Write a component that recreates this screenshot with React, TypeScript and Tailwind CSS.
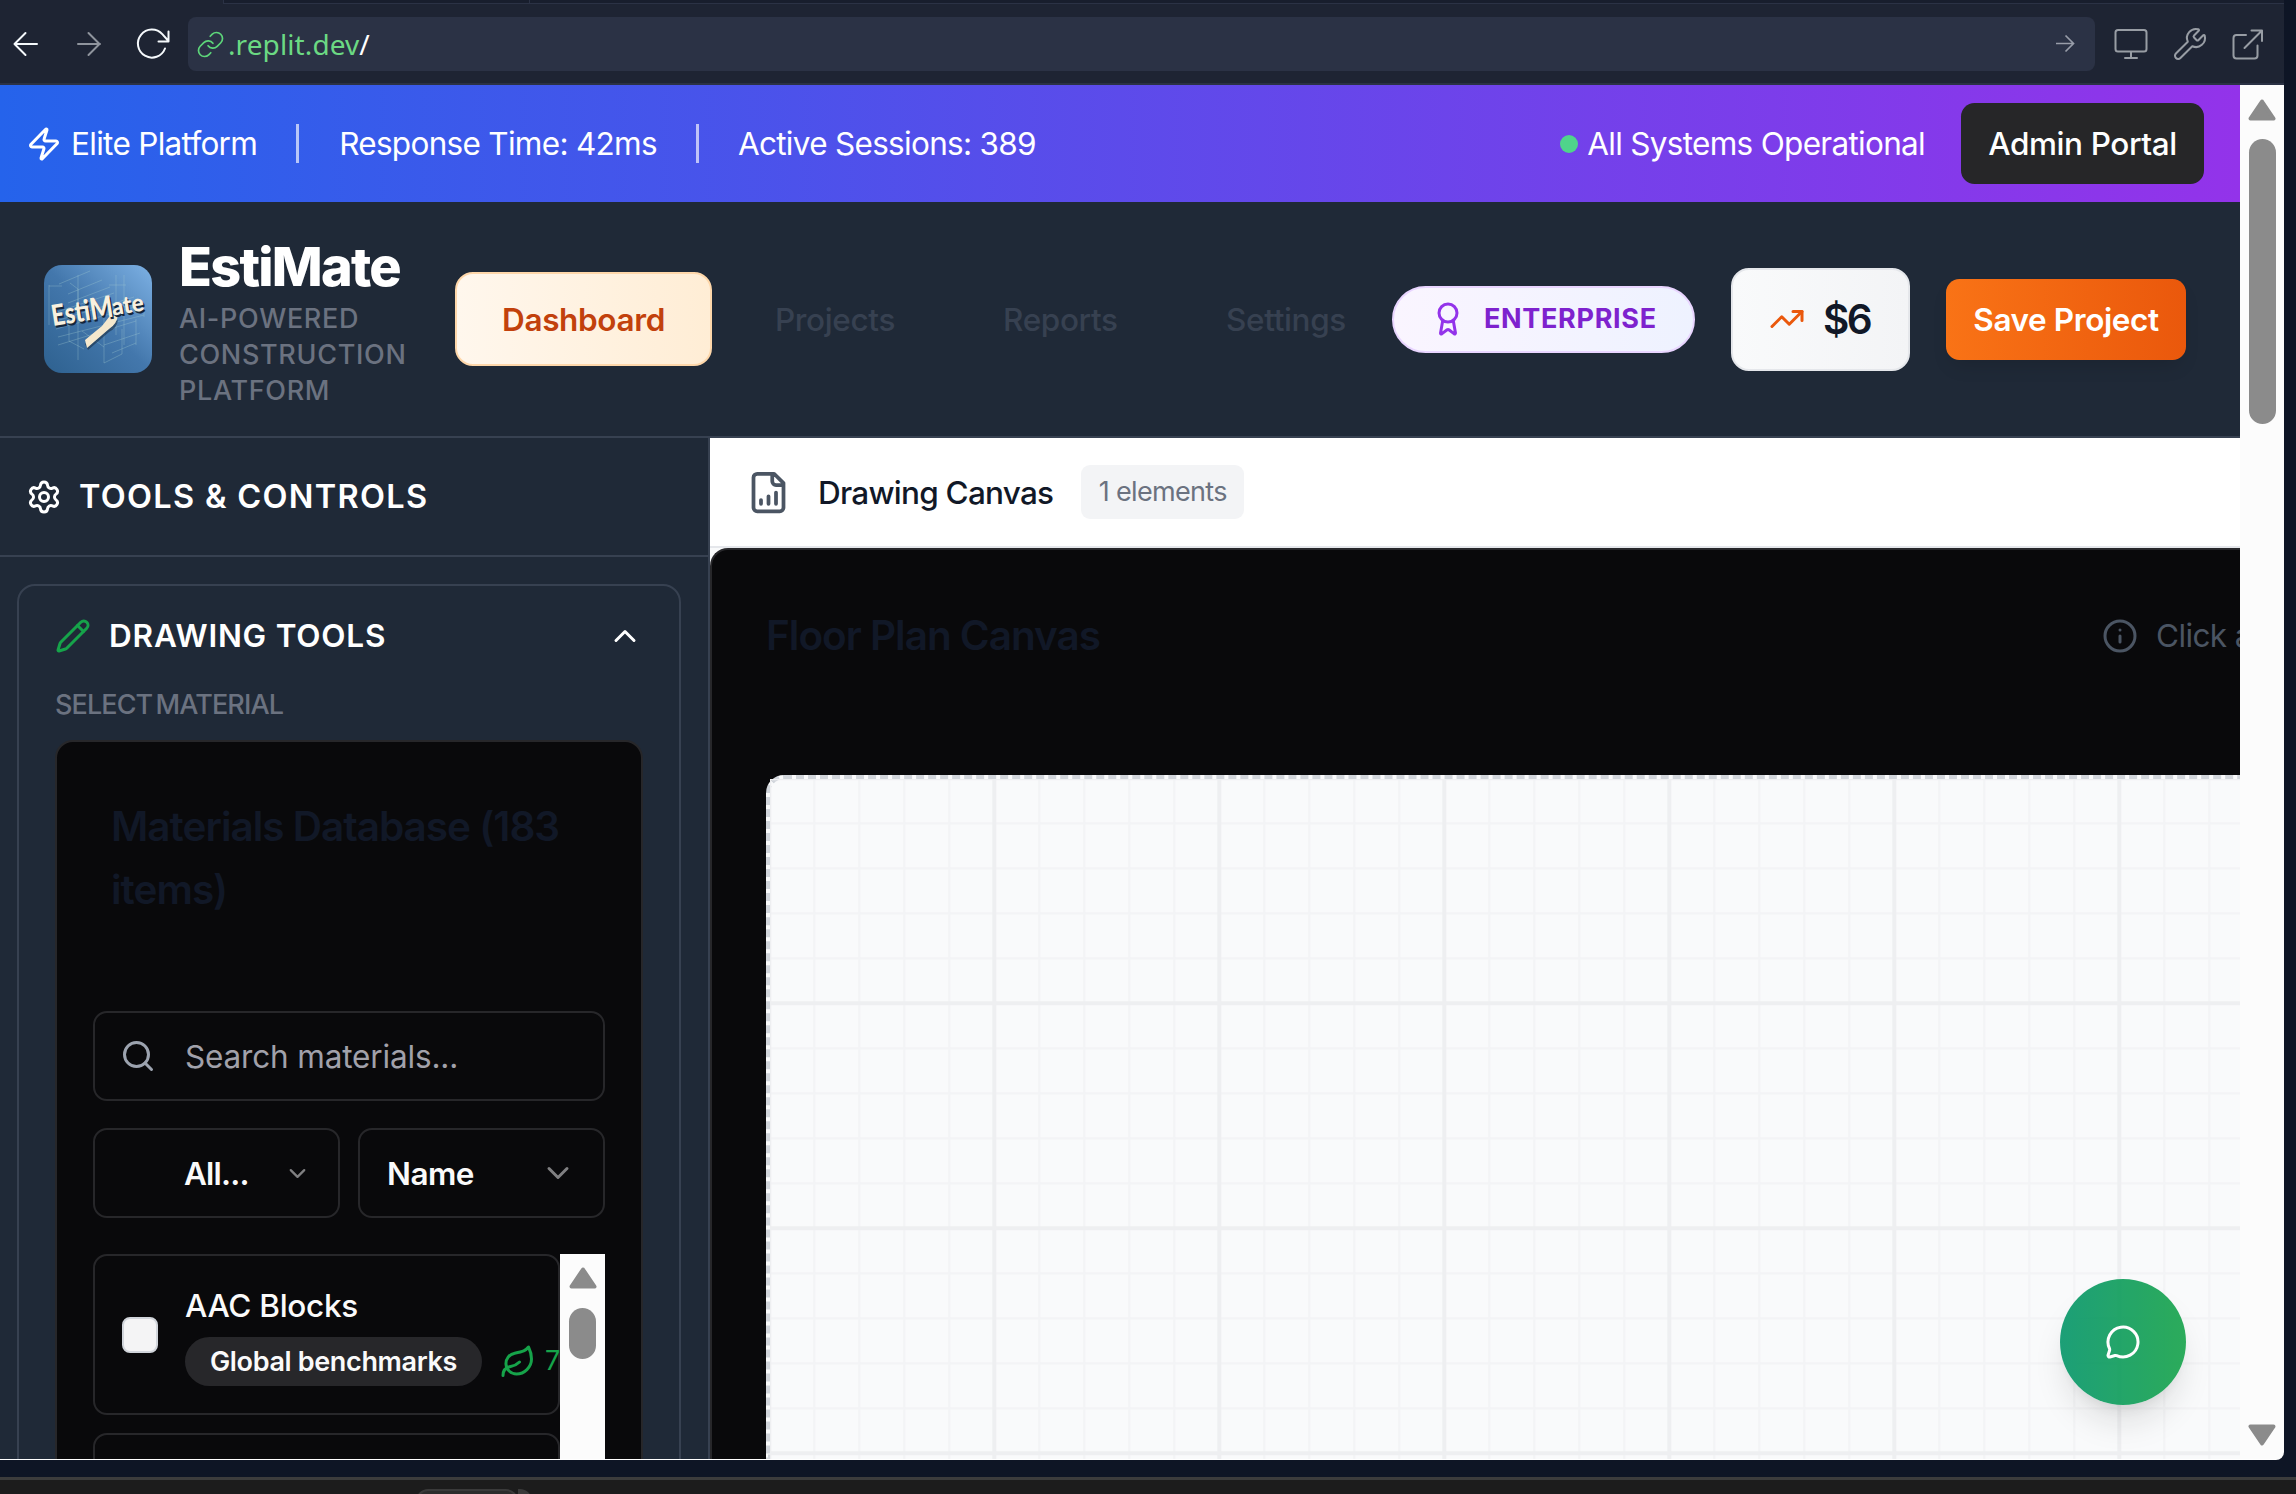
import React from "react";
import {
  Award,
  ChevronDown,
  ChevronUp,
  Info,
  Leaf,
  Link,
  MessageCircle,
  Pencil,
  Search,
  Settings,
  TrendingUp,
  Wrench,
  Zap,
} from "lucide-react";

function ToolbarIcon({ d, className }: { d: string; className: string }) {
  return (
    <svg
      viewBox="0 0 36 36"
      fill="none"
      stroke="currentColor"
      strokeWidth="2"
      strokeLinecap="round"
      strokeLinejoin="round"
      className={`size-9 shrink-0 ${className}`}
    >
      <path d={d} />
    </svg>
  );
}

function BrowserToolbar() {
  return (
    <>
      <div className="flex h-1 shrink-0">
        <div className="w-[223px]" />
        <div className="w-[306px] border-b border-l border-[#2b3245] bg-[#181e2d]" />
        <div className="flex-1 border-b border-l border-[#2b3245] bg-[#181e2d]" />
      </div>
      <div className="flex h-[81px] shrink-0 items-start border-b-2 border-[#2b3245] pt-[13px]">
        <div className="flex h-[54px] items-center pl-2">
          <ToolbarIcon className="text-[#f5f9fc]" d="M29 18H6.500M17.500 7L6.500 18l11 11" />
          <ToolbarIcon className="ml-[27px] text-[#8f949d]" d="M7 18H29M17.500 7l11 11-11 11" />
          <ToolbarIcon
            className="ml-[27px] text-[#f5f9fc]"
            d="M31 22.500A14 14 0 1 1 28.300 8.200L34 14.500M34.500 5.500V15.500H24.500"
          />
        </div>
        <div className="ml-[18px] flex h-[54px] w-[1907px] items-center rounded-lg bg-[#2b3245] pl-2">
          <Link size={29} strokeWidth={1.4} className="text-[#5dd67a]" />
          <div className="ml-[3px] font-['Noto_Sans','Open_Sans',sans-serif] text-[28px] tracking-[0.1px] text-[#6bd983]">
            .replit.dev<span className="text-white">/</span>
          </div>
          <svg viewBox="0 0 20 20" fill="none" stroke="currentColor" strokeWidth="1.7" className="ml-auto mr-5 size-5 text-[#989da9]">
            <path d="M1 9.500H18.500M10.500 1.500l8 8-8 8" />
          </svg>
        </div>
        <div className="flex h-[54px] items-center text-[#989da4]">
          <ToolbarIcon className="ml-[18px]" d="M5 4H31a2.500 2.500 0 0 1 2.500 2.500V23a2.500 2.500 0 0 1-2.500 2.500H5A2.500 2.500 0 0 1 2.500 23V6.500A2.500 2.500 0 0 1 5 4ZM18 25.500V32M12 32H24" />
          <Wrench size={36} strokeWidth={1.35} className="ml-[23px]" />
          <ToolbarIcon className="ml-[22px]" d="M16 9H6.500A3 3 0 0 0 3.500 12V29.500A3 3 0 0 0 6.500 32.500H24.500A3 3 0 0 0 27.500 29.500V19.500M21.500 4.500H32V15M32 4.500L14.500 22" />
        </div>
      </div>
    </>
  );
}

function StatusBanner() {
  return (
    <div className="flex h-[117px] shrink-0 items-center bg-linear-to-r/srgb from-[#2563eb] to-[#9333ea] pr-9 pl-[26px] text-[31.5px] tracking-[-0.7px] text-white">
      <Zap size={36} />
      <span className="ml-[9px]">Elite Platform</span>
      <div className="ml-[39px] h-[39px] w-[3px] bg-white/65" />
      <span className="ml-10">Response Time: 42ms</span>
      <div className="ml-[39px] h-[39px] w-[3px] bg-white/65" />
      <span className="ml-[39px]">Active Sessions: 389</span>
      <div className="ml-auto size-[18px] rounded-full bg-[#4fd48b]" />
      <span className="ml-[9px]">All Systems Operational</span>
      <button className="ml-9 h-[81px] w-[243px] rounded-[13.5px] bg-[#262628] font-medium tracking-[-0.4px]">Admin Portal</button>
    </div>
  );
}

function LogoWord({ dx, dy, fill }: { dx: number; dy: number; fill: string }) {
  return (
    <g transform={`translate(${dx} ${dy}) rotate(-9 9 61)`} fill={fill} fontFamily="Lato, sans-serif" fontWeight="900">
      <text x="9" y="61" fontSize="29" textLength="39" lengthAdjust="spacingAndGlyphs">
        Esti
      </text>
      <text x="48" y="61" fontSize="30" textLength="23" lengthAdjust="spacingAndGlyphs">
        M
      </text>
      <text x="70" y="60" fontSize="24" textLength="32" lengthAdjust="spacingAndGlyphs">
        ate
      </text>
    </g>
  );
}

function Logo() {
  return (
    <div className="flex size-[108px] shrink-0 overflow-hidden rounded-[18px] bg-linear-to-bl/srgb from-[#7db1e4] via-[#4377ac] to-[#2e618f]">
      <svg viewBox="0 0 108 108" className="size-full">
        <g fill="none" stroke="#a6cfd2" strokeWidth="0.7" opacity="0.45">
          <path d="M5 20V60M34 10V95M5 21H18M15 19L46 6M24 29L58 15M24 38L66 22M10 48L70 28M12 56L90 32M12 64L98 40M14 72L100 50M14 80L92 56M25 42V76L40 84M72 10V70M80 10V80M65 20H82M60 40V98L78 89V64M60 80L96 68M68 88L92 78M92 54V80M100 45V52M38 66L60 82M26 18L34 24V44" />
        </g>
        <path d="M74 55Q73 63 65 67L44 85L41 79L58 62Z" fill="#1b2f45" opacity="0.6" />
        <path d="M65 52L74 50Q73 59 65 64L43 83L41 75L58 61Z" fill="#f5e8cd" />
        <LogoWord dx={1.500} dy={2} fill="#15263b" />
        <LogoWord dx={0} dy={0} fill="#f8f0df" />
      </svg>
    </div>
  );
}

function Header() {
  return (
    <header className="flex h-[236px] shrink-0 items-center border-b-2 border-[#374151] pl-11">
      <Logo />
      <div className="ml-[27px] w-[276px] pt-[10px]">
        <div className="h-[54px] text-[54px] leading-[54px] font-extrabold tracking-[-1.75px] text-white">EstiMate</div>
        <div className="mt-[7px] text-[27px] leading-9 font-medium tracking-[0.675px] text-[#6b7280]">
          AI-POWERED
          <br />
          CONSTRUCTION
          <br />
          PLATFORM
        </div>
      </div>
      <nav className="flex items-center text-[31.5px] font-medium tracking-[-0.35px] text-[#374151]">
        <div className="flex h-[94px] w-[257px] items-center justify-center rounded-[18px] border-2 border-[#fed7aa] bg-linear-to-r/srgb from-[#fff7ed] to-[#ffedd5] pt-0.5 font-semibold text-[#c2410c]">
          Dashboard
        </div>
        <span className="ml-[63px] w-[228px] pt-0.5">Projects</span>
        <span className="w-[223px] pt-0.5">Reports</span>
        <span className="w-[166px] pt-0.5">Settings</span>
      </nav>
      <div className="flex h-[67px] w-[303px] items-center rounded-full border-2 border-[#e9d5ff] bg-linear-to-r/srgb from-[#faf5ff] to-[#eef2ff] pl-9 text-[#7e22ce]">
        <Award size={36} className="text-[#9333ea]" />
        <span className="ml-[18px] text-[27px] font-bold tracking-[0.675px]">ENTERPRISE</span>
      </div>
      <div className="ml-9 flex h-[103px] w-[179px] items-center rounded-[18px] border-2 border-[#e5e7eb] bg-linear-to-r/srgb from-[#f9fafb] to-[#f3f4f6] pl-9 text-[#111827]">
        <TrendingUp size={36} className="text-[#ea580c]" />
        <span className="ml-[18px] pt-0.5 text-[40.5px] font-semibold tracking-[-2.5px]">$6</span>
      </div>
      <button className="ml-9 h-[81px] w-[240px] rounded-[13.5px] bg-linear-to-r/srgb from-[#f97316] to-[#ea580c] pt-px text-[31.5px] font-semibold tracking-[-0.4px] text-white shadow-[0_10px_20px_-6px_rgba(0,0,0,0.14)]">
        Save Project
      </button>
    </header>
  );
}

function ScrollArrow({ down = false }: { down?: boolean }) {
  return (
    <svg viewBox="0 0 28 22" className={down ? "h-[22px] w-7 rotate-180" : "h-[22px] w-7"}>
      <path d="M14 2.500L25.500 19.500H2.500Z" fill="#8b8b8b" stroke="#8b8b8b" strokeWidth="4" strokeLinejoin="round" />
    </svg>
  );
}

function MaterialsCard() {
  return (
    <div className="mt-[17px] h-[900px] w-[588px] rounded-[18px] border-2 border-[#27272a] bg-[#09090b] px-9">
      <h3 className="mt-[53px] ml-[18px] w-[480px] text-[40.5px] leading-[63px] font-semibold tracking-[-1.01px] text-[#111827]">
        Materials Database (183 items)
      </h3>
      <div className="mt-[90px] flex h-[90px] w-[512px] items-center rounded-[14px] border-2 border-[#27272a] pl-[25px]">
        <Search size={36} className="text-[#9ca3af]" />
        <span className="ml-[29px] pt-0.5 text-[31.5px] tracking-[-0.16px] text-[#a1a1aa]">Search materials...</span>
      </div>
      <div className="mt-[27px] flex w-[512px] justify-between text-[31.5px] font-semibold tracking-[-0.5px] text-[#fafafa]">
        <div className="flex h-[90px] w-[247px] items-center justify-between rounded-[14px] border-2 border-[#27272a] pr-[27px] pl-[89px]">
          <span className="pt-px tracking-[-0.8px]">All...</span>
          <ChevronDown size={27} className="text-[#808082]" />
        </div>
        <div className="flex h-[90px] w-[247px] items-center justify-between rounded-[14px] border-2 border-[#27272a] pr-[27px] pl-[27px]">
          <span className="pt-px">Name</span>
          <ChevronDown size={36} className="text-[#808082]" />
        </div>
      </div>
      <div className="mt-9 flex h-[300px] w-[512px]">
        <div className="w-[467px] overflow-hidden">
          <div className="flex h-[161px] items-center rounded-[14px] border-2 border-[#27272a] pl-[27px]">
            <div className="size-9 shrink-0 rounded-[8px] border-2 border-[#d1d5db] bg-[#f4f4f5]" />
            <div className="ml-[27px] shrink-0">
              <div className="h-[47px] text-[31.5px] leading-[47px] font-medium tracking-[-0.3px] text-[#fafafa]">AAC Blocks</div>
              <div className="mt-[8px] mb-px flex items-center text-[27px]">
                <span className="flex h-[49px] w-[297px] items-center justify-center rounded-full bg-[#27272a] pt-px font-semibold tracking-[-0.35px] text-[#fafafa]">
                  Global benchmarks
                </span>
                <Leaf size={36} className="ml-[18px] text-[#16a34a]" />
                <span className="ml-[9px] text-[#16a34a]">7</span>
              </div>
            </div>
          </div>
          <div className="mt-[18px] h-[161px] rounded-[14px] border-2 border-[#27272a]" />
        </div>
        <div className="flex w-[45px] flex-col items-center bg-[#fcfcfc] pt-[13px]">
          <ScrollArrow />
          <div className="mt-[19px] h-[51px] w-[27px] rounded-full bg-[#8b8b8b]" />
        </div>
      </div>
    </div>
  );
}

function Sidebar() {
  return (
    <aside className="flex w-[710px] shrink-0 flex-col overflow-hidden border-r-2 border-[#374151]">
      <div className="flex h-[119px] shrink-0 items-center border-b-2 border-[#374151] pl-[26px] text-white">
        <Settings size={36} />
        <h2 className="ml-[17px] pt-0.5 text-[32.5px] font-semibold tracking-[1.3px]">TOOLS &amp; CONTROLS</h2>
      </div>
      <div className="mt-[27px] ml-[17px] h-[1100px] w-[664px] shrink-0 rounded-[18px] border-2 border-[#374151] pt-[27px] pl-9">
        <div className="flex h-[45px] items-center pr-9">
          <Pencil size={36} className="text-[#16a34a]" />
          <h3 className="ml-[18px] text-[31.5px] font-semibold tracking-[0.79px] text-white">DRAWING TOOLS</h3>
          <ChevronUp size={36} className="ml-auto text-white" />
        </div>
        <div className="mt-[29px] h-9 text-[27px] leading-9 font-medium tracking-[-0.9px] text-[#6b7280] [word-spacing:-3px]">SELECT MATERIAL</div>
        <MaterialsCard />
      </div>
    </aside>
  );
}

function CanvasPanel() {
  return (
    <main className="flex min-w-0 flex-1 flex-col overflow-hidden bg-[#f9fafb]">
      <div className="flex h-[110px] shrink-0 items-center border-b-2 border-[#e5e7eb] bg-white pl-9">
        <svg
          viewBox="0 0 24 24"
          fill="none"
          stroke="currentColor"
          strokeWidth="2"
          strokeLinecap="round"
          strokeLinejoin="round"
          className="size-[45px] text-[#4b5563]"
        >
          <path d="M15 2H6a2 2 0 0 0-2 2v16a2 2 0 0 0 2 2h12a2 2 0 0 0 2-2V7ZM14 2v4a2 2 0 0 0 2 2h4M8 18v-2M12 18v-4M16 18v-6" />
        </svg>
        <span className="ml-[27px] pt-0.5 text-[31.5px] font-medium tracking-[-0.75px] text-[#111827]">Drawing Canvas</span>
        <span className="ml-7 flex h-[54px] w-[163px] items-center justify-center rounded-[9px] bg-[#f3f4f6] text-[27px] tracking-[-0.675px] text-[#6b7280]">
          1 elements
        </span>
      </div>
      <div className="flex w-[1800px] flex-1 flex-col rounded-tl-[18px] border-t-2 border-l-2 border-[#27272a] bg-[#09090b] pl-[54px]">
        <div className="flex h-[225px] shrink-0 items-start pt-[54px]">
          <h2 className="h-[63px] w-[1336px] text-[40.5px] leading-[63px] font-semibold tracking-[-1.01px] text-[#111827]">Floor Plan Canvas</h2>
          <div className="flex h-[63px] items-center whitespace-nowrap text-[31.5px] text-[#4b5563]">
            <Info size={36} />
            <span className="ml-[18px] tracking-[-0.6px]">Click and drag to draw</span>
          </div>
        </div>
        <div className="w-[1744px] flex-1 rounded-tl-[18px] border-t-4 border-l-4 border-dashed border-[#d1d5db] bg-[#f9fafb]">
          <svg className="size-full">
            <defs>
              <pattern id="minor" x="-3" y="-3" width="45" height="45" patternUnits="userSpaceOnUse">
                <path d="M45 2.300H0M2.300 0V45" fill="none" stroke="#f3f4f6" strokeWidth="2.250" />
              </pattern>
              <pattern id="major" x="-3" y="-3" width="225" height="225" patternUnits="userSpaceOnUse">
                <path d="M225 2.300H0M2.300 0V225" fill="none" stroke="#eeeff1" strokeWidth="4" />
              </pattern>
            </defs>
            <rect width="100%" height="100%" fill="url(#minor)" />
            <rect width="100%" height="100%" fill="url(#major)" />
          </svg>
        </div>
      </div>
    </main>
  );
}

export default function App() {
  return (
    <div className="relative flex h-[1494px] w-[2296px] flex-col overflow-hidden bg-[#0e1525] font-['Inter',sans-serif]">
      <div className="flex h-[1460px] w-[2284px] shrink-0 flex-col overflow-hidden rounded-br-[8px] bg-[#1e2433]">
        <BrowserToolbar />
        <div className="flex min-h-0 flex-1 border-b border-white">
          <div className="flex w-[2240px] shrink-0 flex-col bg-[#1f2937]">
            <StatusBanner />
            <Header />
            <div className="flex min-h-0 flex-1">
              <Sidebar />
              <CanvasPanel />
            </div>
          </div>
          <div className="flex w-11 flex-col items-center bg-[#fcfcfc] pt-[14px] pb-[13px]">
            <ScrollArrow />
            <div className="mt-[18px] h-[285px] w-[27px] rounded-full bg-[#8b8b8b]" />
            <div className="mt-auto">
              <ScrollArrow down />
            </div>
          </div>
        </div>
      </div>
      <div className="mt-[17px] flex-1 border-t-[3px] border-[#3c3c3c] bg-[#1c1c1c] pt-[9px] pl-[416px]">
        <div className="flex">
          <div className="h-[20px] w-[102px] rounded-t-[12px] border-2 border-[#3a3a3a] bg-[#2c2c2c]" />
          <div className="h-[20px] w-[14px] rounded-tr-[12px] bg-[#3a3a3a]" />
        </div>
      </div>
      <button className="absolute top-[1279px] left-[2060px] flex size-[126px] items-center justify-center rounded-full bg-linear-to-r/srgb from-[#059669] to-[#16a34a] opacity-90 shadow-[0_22px_34px_-7px_rgba(0,0,0,0.13),0_9px_14px_-9px_rgba(0,0,0,0.13)]">
        <MessageCircle size={36} className="text-white" />
      </button>
    </div>
  );
}
